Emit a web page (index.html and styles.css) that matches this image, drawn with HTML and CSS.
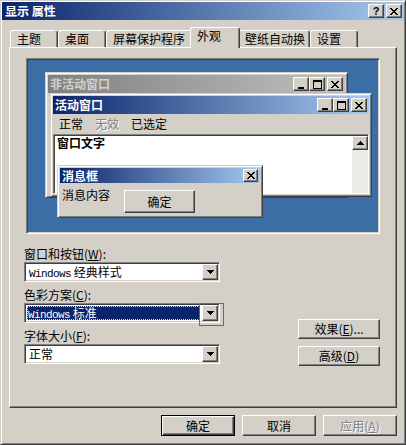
FILE: index.html
```html
<!DOCTYPE html>
<html lang="zh-CN">
<head>
<meta charset="utf-8">
<title>显示 属性</title>
<link rel="stylesheet" href="styles.css">
</head>
<body>
<div class="win">
  <div class="titlebar">
    <span class="title">显示 属性</span>
    <div class="capbtns">
      <span class="cap raised help">?</span>
      <span class="cap raised"><svg width="8" height="7" viewBox="0 0 8 7"><path d="M0 0h2v1H0z M6 0h2v1H6z M1 1h2v1H1z M5 1h2v1H5z M2 2h4v1H2z M3 3h2v1H3z M2 4h4v1H2z M1 5h2v1H1z M5 5h2v1H5z M0 6h2v1H0z M6 6h2v1H6z" fill="#000"/></svg></span>
    </div>
  </div>

  <div class="tabs">
    <div class="tab w48">主题</div>
    <div class="tab w48">桌面</div>
    <div class="tab w86">屏幕保护程序</div>
    <div class="tab sel">外观</div>
    <div class="tab w72">壁纸自动换</div>
    <div class="tab w48">设置</div>
  </div>

  <div class="panel">
    <div class="preview">
      <div class="desk">
        <div class="pwin inactive">
          <div class="capbar">
            <span class="ctitle">非活动窗口</span>
            <div class="cbtns">
              <span class="cbtn raised"><svg width="9" height="9" viewBox="0 0 9 9"><rect x="1" y="7" width="6" height="2" fill="#000"/></svg></span>
              <span class="cbtn raised"><svg width="9" height="9" viewBox="0 0 9 9"><path d="M0 0h9v9H0z M1 2v6h7V2z" fill="#000" fill-rule="evenodd"/></svg></span>
              <span class="cbtn raised gap"><svg width="8" height="7" viewBox="0 0 8 7"><path d="M0 0h2v1H0z M6 0h2v1H6z M1 1h2v1H1z M5 1h2v1H5z M2 2h4v1H2z M3 3h2v1H3z M2 4h4v1H2z M1 5h2v1H1z M5 5h2v1H5z M0 6h2v1H0z M6 6h2v1H6z" fill="#000"/></svg></span>
            </div>
          </div>
        </div>

        <div class="pwin active">
          <div class="capbar">
            <span class="ctitle">活动窗口</span>
            <div class="cbtns">
              <span class="cbtn raised"><svg width="9" height="9" viewBox="0 0 9 9"><rect x="1" y="7" width="6" height="2" fill="#000"/></svg></span>
              <span class="cbtn raised"><svg width="9" height="9" viewBox="0 0 9 9"><path d="M0 0h9v9H0z M1 2v6h7V2z" fill="#000" fill-rule="evenodd"/></svg></span>
              <span class="cbtn raised gap"><svg width="8" height="7" viewBox="0 0 8 7"><path d="M0 0h2v1H0z M6 0h2v1H6z M1 1h2v1H1z M5 1h2v1H5z M2 2h4v1H2z M3 3h2v1H3z M2 4h4v1H2z M1 5h2v1H1z M5 5h2v1H5z M0 6h2v1H0z M6 6h2v1H6z" fill="#000"/></svg></span>
            </div>
          </div>
          <div class="menubar">
            <span>正常</span>
            <span class="dis">无效</span>
            <span>已选定</span>
          </div>
          <div class="client">
            <div class="ctext">窗口文字</div>
            <div class="vscroll">
              <span class="sbtn raised"><svg width="7" height="4" viewBox="0 0 7 4"><path d="M3 0h1v1H3z M2 1h3v1H2z M1 2h5v1H1z M0 3h7v1H0z" fill="#000"/></svg></span>
            </div>
          </div>
        </div>

        <div class="pwin msgbox">
          <div class="capbar small">
            <span class="ctitle">消息框</span>
            <span class="cbtn raised mclose"><svg width="8" height="7" viewBox="0 0 8 7"><path d="M0 0h2v1H0z M6 0h2v1H6z M1 1h2v1H1z M5 1h2v1H5z M2 2h4v1H2z M3 3h2v1H3z M2 4h4v1H2z M1 5h2v1H1z M5 5h2v1H5z M0 6h2v1H0z M6 6h2v1H6z" fill="#000"/></svg></span>
          </div>
          <div class="msgbody">
            <span class="msgtext">消息内容</span>
            <span class="btn raised okbtn">确定</span>
          </div>
        </div>
      </div>
    </div>

    <div class="settings">
      <div class="leftcol">
        <div class="group">
          <div class="lbl">窗口和按钮(<u>W</u>):</div>
          <div class="combo">
            <span class="val"><span class="mono">Windows</span> 经典样式</span>
            <span class="dd raised"><svg width="7" height="4" viewBox="0 0 7 4"><path d="M0 0h7v1H0z M1 1h5v1H1z M2 2h3v1H2z M3 3h1v1H3z" fill="#000"/></svg></span>
          </div>
        </div>
        <div class="group">
          <div class="lbl">色彩方案(<u>C</u>):</div>
          <div class="combo">
            <span class="val selv"><span class="mono">Windows</span> 标准</span>
            <span class="dd raised"><svg width="7" height="4" viewBox="0 0 7 4"><path d="M0 0h7v1H0z M1 1h5v1H1z M2 2h3v1H2z M3 3h1v1H3z" fill="#000"/></svg></span>
            <span class="mark"></span>
          </div>
        </div>
        <div class="group">
          <div class="lbl">字体大小(<u>F</u>):</div>
          <div class="combo">
            <span class="val">正常</span>
            <span class="dd raised"><svg width="7" height="4" viewBox="0 0 7 4"><path d="M0 0h7v1H0z M1 1h5v1H1z M2 2h3v1H2z M3 3h1v1H3z" fill="#000"/></svg></span>
          </div>
        </div>
      </div>
      <div class="rightcol">
        <span class="btn raised sidebtn">效果(<u>E</u>)...</span>
        <span class="btn raised sidebtn">高级(<u>D</u>)</span>
      </div>
    </div>
  </div>

  <div class="footer">
    <span class="btn fbtn default">确定</span>
    <span class="btn fbtn raised">取消</span>
    <span class="btn fbtn raised disabled">应用(<u>A</u>)</span>
  </div>
</div>
</body>
</html>
```

FILE: styles.css
```css
* { box-sizing: border-box; }
html, body { margin: 0; padding: 0; }
body {
  width: 406px;
  height: 445px;
  overflow: hidden;
  background: #d4d0c8;
  font-family: "Noto Sans CJK SC", sans-serif;
  font-size: 12px;
  color: #000;
}
u { text-decoration: underline; text-underline-offset: 1px; }

.raised {
  background: #d4d0c8;
  border: 1px solid;
  border-color: #fff #404040 #404040 #fff;
  box-shadow: inset -1px -1px #808080;
}

.win {
  width: 406px;
  height: 445px;
  border: 1px solid;
  border-color: #d4d0c8 #404040 #404040 #d4d0c8;
  box-shadow: inset 1px 1px #fff, inset -1px -1px #808080;
  padding: 1px;
  background: #d4d0c8;
  display: flex;
  flex-direction: column;
}

.titlebar {
  flex: none;
  height: 18px;
  display: flex;
  align-items: center;
  padding: 0 2px 0 3px;
  background: linear-gradient(to right, #0a246a, #a6caf0);
}
.title { flex: 1; color: #fff; font-weight: 700; line-height: 14px; }
.capbtns { display: flex; gap: 2px; }
.cap {
  width: 16px;
  height: 14px;
  display: flex;
  align-items: center;
  justify-content: center;
}
.help {
  font-family: "Liberation Sans", sans-serif;
  font-weight: 700;
  font-size: 11px;
  line-height: 12px;
}

.tabs {
  flex: none;
  height: 20px;
  margin-top: 7px;
  padding-left: 8px;
  display: flex;
  align-items: flex-end;
  position: relative;
  z-index: 1;
}
.tab {
  height: 17px;
  border-top: 1px solid #fff;
  border-left: 1px solid #fff;
  border-right: 1px solid #404040;
  box-shadow: inset -1px 0 #808080;
  border-radius: 3px 3px 0 0;
  padding-left: 6px;
  line-height: 15px;
  white-space: nowrap;
  background: #d4d0c8;
}
.w48 { width: 48px; }
.w72 { width: 72px; }
.w86 { width: 86px; }
.tab.sel {
  width: 50px;
  height: 21px;
  margin: 0 -2px -1px;
  position: relative;
  z-index: 2;
}

.panel {
  flex: none;
  margin-left: 7px;
  width: 388px;
  height: 361px;
  border: 1px solid;
  border-color: #fff #404040 #404040 #fff;
  box-shadow: inset -1px -1px #808080;
}

.preview {
  margin: 10px 0 0 16px;
  width: 354px;
  height: 176px;
  border: 1px solid;
  border-color: #808080 #fff #fff #808080;
  box-shadow: inset 1px 1px #404040, inset -1px -1px #d4d0c8;
  padding: 1px;
}
.desk {
  position: relative;
  width: 100%;
  height: 100%;
  background: #3a6ea5;
  overflow: hidden;
}

.pwin {
  position: absolute;
  background: #d4d0c8;
  border: 1px solid;
  border-color: #d4d0c8 #404040 #404040 #d4d0c8;
  box-shadow: inset 1px 1px #fff, inset -1px -1px #808080;
  padding: 2px;
  display: flex;
  flex-direction: column;
}
.inactive { left: 17px; top: 12px; width: 303px; height: 126px; }
.active { left: 22px; top: 33px; width: 322px; height: 104px; }
.msgbox { left: 29px; top: 105px; width: 206px; height: 53px; }

.capbar {
  flex: none;
  height: 18px;
  display: flex;
  align-items: center;
  padding: 0 2px;
  background: linear-gradient(to right, #0a246a, #a6caf0);
  color: #fff;
  font-weight: 700;
}
.inactive .capbar {
  background: linear-gradient(to right, #808080, #c0c0c0);
  color: #d4d0c8;
}
.capbar.small { height: 15px; }
.ctitle { flex: 1; line-height: 14px; white-space: nowrap; }
.cbtns { display: flex; }
.cbtn {
  width: 16px;
  height: 14px;
  display: flex;
  align-items: center;
  justify-content: center;
}
.cbtn.gap { margin-left: 2px; }
.mclose { width: 15px; height: 13px; }

.menubar {
  flex: none;
  height: 20px;
  display: flex;
  align-items: center;
}
.menubar span { padding: 0 6px; line-height: 14px; }
.dis, .disabled { color: #808080; text-shadow: 1px 1px #fff; }

.client {
  flex: 1;
  display: flex;
  background: #fff;
  border: 1px solid;
  border-color: #808080 #fff #fff #808080;
  box-shadow: inset 1px 1px #404040;
  padding: 1px 0 0 1px;
}
.ctext { flex: 1; padding-left: 2px; font-weight: 700; line-height: 14px; }
.vscroll {
  width: 16px;
  background: #ecebe8;
  display: flex;
  flex-direction: column;
}
.sbtn {
  width: 16px;
  height: 14px;
  display: flex;
  align-items: center;
  justify-content: center;
}

.msgbody {
  display: flex;
  align-items: flex-start;
  gap: 14px;
  padding: 5px 0 0 2px;
}
.msgtext { line-height: 14px; }
.btn {
  display: flex;
  align-items: center;
  justify-content: center;
  line-height: 14px;
  white-space: nowrap;
}
.okbtn { width: 71px; height: 23px; margin-top: 2px; }

.settings {
  display: grid;
  grid-template-columns: 196px 82px;
  column-gap: 78px;
  margin: 13px 0 0 14px;
}
.group + .group { margin-top: 6px; }
.lbl { line-height: 14px; margin-bottom: 1px; }
.combo {
  position: relative;
  height: 20px;
  display: flex;
  background: #fff;
  border: 1px solid;
  border-color: #808080 #fff #fff #808080;
  box-shadow: inset 1px 1px #404040, inset -1px -1px #d4d0c8;
  padding: 1px;
}
.val {
  flex: 1;
  margin: 0 1px;
  padding-left: 2px;
  line-height: 16px;
  white-space: nowrap;
}
.val.selv {
  background: #0a246a;
  color: #fff;
  margin: 1px 2px 1px 1px;
  line-height: 14px;
  padding-left: 1px;
  outline: 1px dotted #e8d890;
  outline-offset: -1px;
}
.mono {
  font-family: "Liberation Mono", monospace;
  font-size: 11px;
  letter-spacing: -0.6px;
}
.dd {
  flex: none;
  width: 16px;
  height: 16px;
  display: flex;
  align-items: center;
  justify-content: center;
}
.mark {
  position: absolute;
  left: 174px;
  top: -1px;
  width: 25px;
  height: 23px;
  border: 1px solid #d93a3a;
}

.rightcol {
  padding-top: 72px;
  display: flex;
  flex-direction: column;
  gap: 7px;
}
.sidebtn { width: 82px; height: 20px; }

.footer {
  flex: none;
  margin-top: 7px;
  padding-right: 7px;
  display: flex;
  justify-content: flex-end;
  gap: 7px;
}
.fbtn { width: 74px; height: 21px; }
.default {
  background: #d4d0c8;
  border: 1px solid #000;
  box-shadow: inset 1px 1px #fff, inset -1px -1px #404040, inset -2px -2px #808080;
}
```
